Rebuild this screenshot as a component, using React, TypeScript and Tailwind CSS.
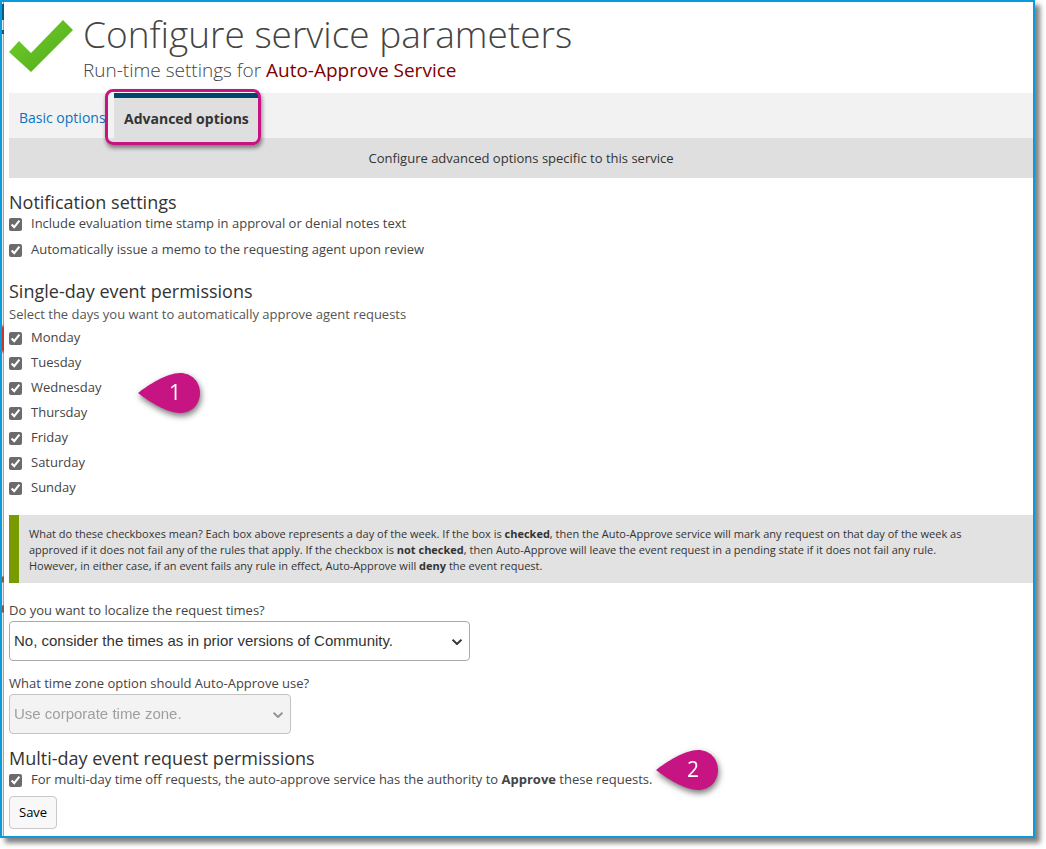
import { ReactNode, useState } from "react";

const DAYS = ["Monday", "Tuesday", "Wednesday", "Thursday", "Friday", "Saturday", "Sunday"];

function CheckRow({ id, className, children }: { id: string; className: string; children: ReactNode }) {
  const [checked, setChecked] = useState(true);
  return (
    <div className={`flex items-center ${className}`}>
      <input
        id={id}
        type="checkbox"
        checked={checked}
        onChange={(e) => setChecked(e.target.checked)}
        className="mt-[3px] size-[13px] shrink-0 accent-[#6b6b6b]"
      />
      <label htmlFor={id} className="pl-[9px]">
        {children}
      </label>
    </div>
  );
}

function Marker({ n }: { n: number }) {
  return (
    <svg width="62" height="42" viewBox="0 0 62 42" className="overflow-visible drop-shadow-[1px_3px_3px_rgba(0,0,0,0.55)]">
      <path d="M0 21 C10 13 29 1 42 1 C54 1 62 10 62 21 C62 32 54 41 42 41 C29 41 10 29 0 21 Z" fill="#c71483" />
      <text x="37" y="28" textAnchor="middle" fill="#fff" fontSize="21" fontWeight="500" fontFamily="Open Sans, sans-serif">
        {n}
      </text>
    </svg>
  );
}

function SectionTitle({ children }: { children: ReactNode }) {
  return <h2 className="text-[18px] leading-6 text-[#333]">{children}</h2>;
}

export default function App() {
  return (
    <div className="bg-white pr-[11px] pb-[11px] font-['Open_Sans','Noto_Sans',sans-serif] text-[13px] leading-5 text-[#444]">
      <main className="border-2 border-[#0a9bdc] shadow-[5px_5px_5px_rgba(0,0,0,0.5)]">
        <div className="bg-[linear-gradient(to_bottom,transparent_2px,#0d5a80_2px,#0d5a80_18px,transparent_18px,transparent_28px,#0d5a80_28px,#0d5a80_32px,transparent_32px,transparent_322px,#c8372f_326px,#c8372f_348px,transparent_352px,transparent_574px,#8a5a3a_575px,#8a5a3a_580px,transparent_581px,transparent_603px,#8a5a3a_604px,#8a5a3a_610px,transparent_611px),linear-gradient(to_right,#e8e8e8_1px,#a5a5a5_1px)] pl-[2px]">
          <div className="bg-white pb-[7px] pl-[5px]">
            <header className="flex h-[91px] items-start">
              <svg width="66" height="54" viewBox="0 0 66 54" className="mt-[18px] shrink-0" aria-hidden="true">
                <defs>
                  <linearGradient id="tick" x1="0" y1="0" x2="1" y2="1">
                    <stop offset="0" stopColor="#74d02c" />
                    <stop offset="1" stopColor="#4fa91a" />
                  </linearGradient>
                </defs>
                <path d="M0 32 L10 21 L22 33 L54 0 L64 10 L22 52 Z" fill="url(#tick)" />
              </svg>
              <div className="pl-2">
                <h1 className="pt-2 text-[37px] leading-[48px] font-light">Configure service parameters</h1>
                <p className="text-[19px] leading-6 font-light">
                  Run-time settings for <span className="font-normal text-[#800000]">Auto-Approve Service</span>
                </p>
              </div>
            </header>

            <nav className="flex h-[45px] bg-[#f2f2f2] text-[14px]">
              <a href="#basic" className="flex items-center pt-[5px] pl-[10px] text-[#0b72c4]">
                <span className="w-[86px] whitespace-nowrap">Basic options</span>
              </a>
              <div className="relative ml-[9px] flex">
                <a
                  href="#advanced"
                  className="flex items-center border-t-[5px] border-[#00456b] bg-[#dfdfdf] px-[10px] pt-px font-bold text-[#333]"
                >
                  Advanced options
                </a>
                <div className="pointer-events-none absolute -top-[4px] -right-0.5 -bottom-[7px] -left-[9px] rounded-lg border-[3px] border-[#c71483] shadow-[1px_3px_4px_rgba(0,0,0,0.45)]" />
              </div>
            </nav>
            <p className="flex h-10 items-center justify-center bg-[#dfdfdf] text-[#333]">
              Configure advanced options specific to this service
            </p>

            <section className="pt-3">
              <SectionTitle>Notification settings</SectionTitle>
              <CheckRow id="stamp" className="h-[17px]">
                Include evaluation time stamp in approval or denial notes text
              </CheckRow>
              <CheckRow id="memo" className="mt-2 h-5">
                Automatically issue a memo to the requesting agent upon review
              </CheckRow>
            </section>

            <section className="pt-5">
              <SectionTitle>Single-day event permissions</SectionTitle>
              <p className="pt-px text-[#555]">Select the days you want to automatically approve agent requests</p>
              <div className="relative">
                {DAYS.map((d) => (
                  <CheckRow key={d} id={d} className="h-[25px]">
                    {d}
                  </CheckRow>
                ))}
                <div className="absolute top-[48px] left-[129px]">
                  <Marker n={1} />
                </div>
              </div>
              <p className="mt-4 border-l-[10px] border-[#7a9a01] bg-[#e2e2e2] px-[10px] pt-[11px] pb-[9px] text-[11px] leading-4 text-[#333]">
                What do these checkboxes mean? Each box above represents a day of the week. If the box is <b>checked</b>, then
                the Auto-Approve service will mark any request on that day of the week as
                <br />
                approved if it does not fail any of the rules that apply. If the checkbox is <b>not checked</b>, then
                Auto-Approve will leave the event request in a pending state if it does not fail any rule.
                <br />
                However, in either case, if an event fails any rule in effect, Auto-Approve will <b>deny</b> the event
                request.
              </p>
            </section>

            <section className="flex flex-col items-start pt-[17px]">
              <label htmlFor="localize">Do you want to localize the request times?</label>
              <div className="relative mt-px font-['Liberation_Sans',sans-serif] text-[15px]">
                <select
                  id="localize"
                  className="h-10 w-[461px] appearance-none rounded border border-[#aaa] bg-white pr-8 pb-px pl-1 text-[#333]"
                >
                  <option>No, consider the times as in prior versions of Community.</option>
                </select>
                <svg width="10" height="6" viewBox="0 0 10 6" className="pointer-events-none absolute top-[18px] right-2" aria-hidden="true">
                  <path d="M0.500 0.700 L5 5 L9.500 0.700" fill="none" stroke="#333" strokeWidth="2" />
                </svg>
              </div>
              <label htmlFor="zone" className="mt-3">
                What time zone option should Auto-Approve use?
              </label>
              <div className="relative mt-px font-['Liberation_Sans',sans-serif] text-[15px] opacity-70">
                <select
                  id="zone"
                  disabled
                  className="h-10 w-[282px] appearance-none rounded border border-[#aaa] bg-[#eee] pr-8 pb-px pl-1 text-[#777]"
                >
                  <option>Use corporate time zone.</option>
                </select>
                <svg width="10" height="6" viewBox="0 0 10 6" className="pointer-events-none absolute top-[18px] right-2" aria-hidden="true">
                  <path d="M0.500 0.700 L5 5 L9.500 0.700" fill="none" stroke="#666" strokeWidth="2" />
                </svg>
              </div>
            </section>

            <section className="pt-3">
              <SectionTitle>Multi-day event request permissions</SectionTitle>
              <div className="flex items-center">
                <CheckRow id="multi" className="h-[17px]">
                  For multi-day time off requests, the auto-approve service has the authority to <b>Approve</b> these requests.
                </CheckRow>
                <div className="relative h-0 w-20">
                  <div className="absolute -top-[30px] left-1">
                    <Marker n={2} />
                  </div>
                </div>
              </div>
              <button
                type="button"
                className="mt-[9px] h-[33px] rounded border border-[#c8c8c8] bg-[#f8f8f8] px-[9px] pb-0.5 text-[13px] text-black"
              >
                Save
              </button>
            </section>
          </div>
        </div>
      </main>
    </div>
  );
}
